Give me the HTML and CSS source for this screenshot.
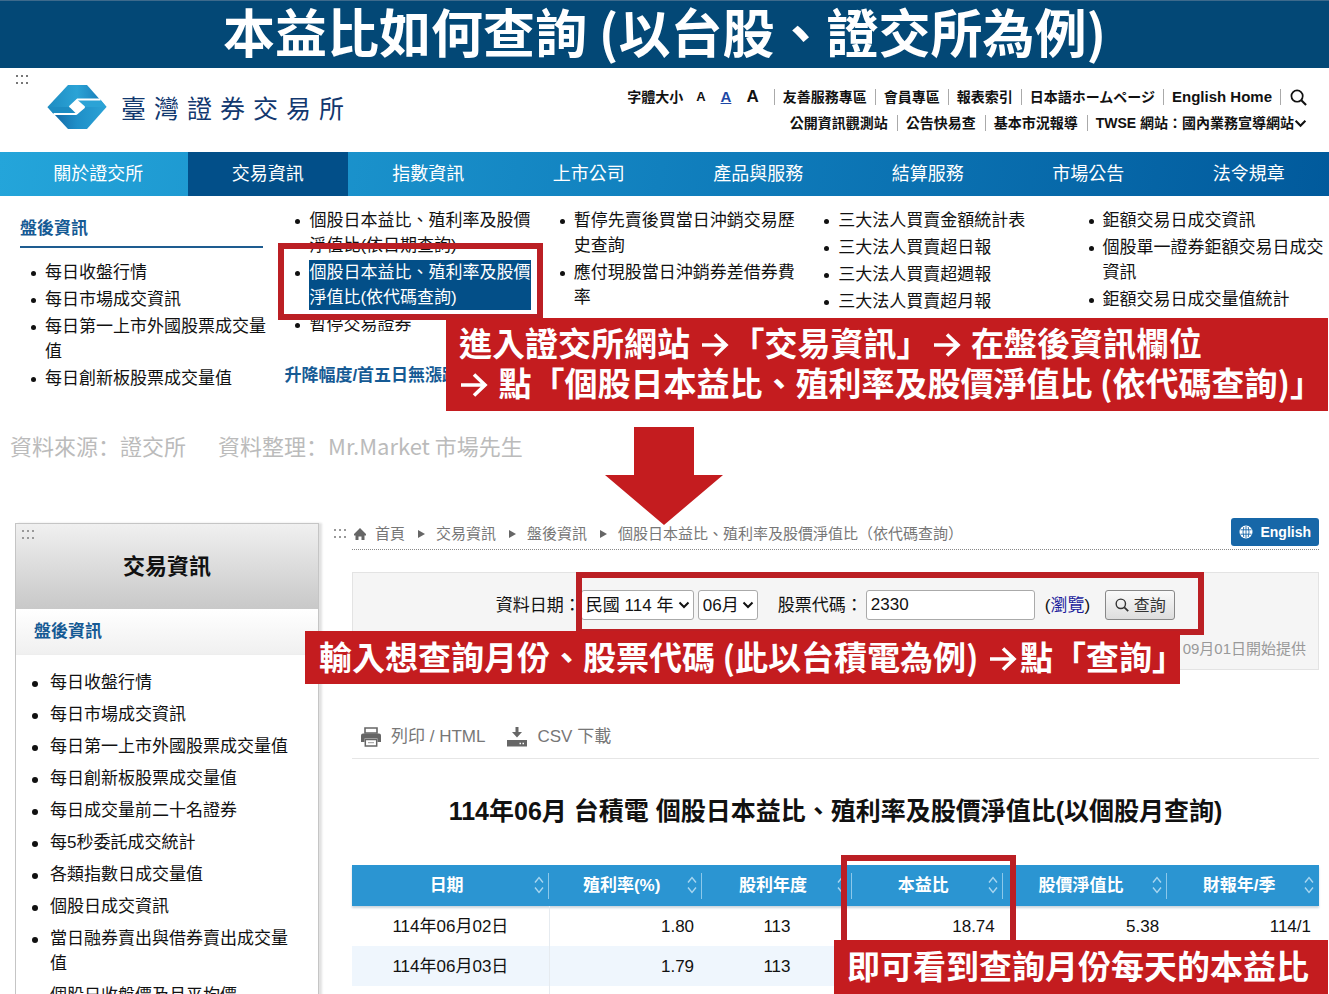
FILE: index.html
```html
<!DOCTYPE html>
<html lang="zh-Hant">
<head>
<meta charset="utf-8">
<title>本益比如何查詢</title>
<link rel="stylesheet" href="styles.css">
</head>
<body>
<svg class="defs" aria-hidden="true">
  <symbol id="arrow" viewBox="0 0 28 28"><path d="M1 15H25M14 4.500L25 15L14 25.500" fill="none" stroke="currentColor" stroke-width="3.600"/></symbol>
  <symbol id="grip" viewBox="0 0 14 12"><path d="M1 1h2v2H1zM6 1h2v2H6zM11 1h2v2h-2zM1 8h2v2H1zM6 8h2v2H6zM11 8h2v2h-2z" fill="currentColor"/></symbol>
  <symbol id="search" viewBox="0 0 18 18"><circle cx="7.500" cy="7.500" r="6" fill="none" stroke="currentColor" stroke-width="1.800"/><path d="M12 12L17 17" stroke="currentColor" stroke-width="2.200"/></symbol>
  <symbol id="chevron" viewBox="0 0 12 8"><path d="M1.500 1.500L6 6L10.500 1.500" fill="none" stroke="currentColor" stroke-width="2"/></symbol>
  <symbol id="sort" viewBox="0 0 10 18"><path d="M1 6.500L5 1.500L9 6.500M1 11.500L5 16.500L9 11.500" fill="none" stroke="currentColor" stroke-width="1.400"/></symbol>
</svg>
<div class="page">
  <h1 class="banner">本益比如何查詢 (以台股、證交所為例)</h1>

  <header class="header">
    <svg class="grip grip-dark"><use href="#grip"/></svg>
    <div class="brand">
      <svg class="logo" viewBox="0 0 59 44">
        <defs>
          <linearGradient id="g1" x1="0" y1="0" x2="1" y2="0"><stop offset="0" stop-color="#1d8cc2"/><stop offset=".5" stop-color="#2ba3d6"/><stop offset="1" stop-color="#1575b2"/></linearGradient>
          <linearGradient id="g2" x1="0" y1="0" x2="1" y2="0"><stop offset="0" stop-color="#115f9d"/><stop offset=".5" stop-color="#1f8fc8"/><stop offset="1" stop-color="#2ba3d6"/></linearGradient>
        </defs>
        <path d="M0 22L20.500 0H39.500L59 22Z" fill="url(#g1)"/>
        <path d="M0 22H59L39.500 44H20.500Z" fill="url(#g2)"/>
        <path d="M31 14.500H53L59 22H36Z" fill="#2ba3d6"/>
        <path d="M0 22H22L28 29H6Z" fill="#1d8cc2"/>
        <path d="M53 14.500H30L22 22M6 29H28.500L37 22" fill="none" stroke="#fff" stroke-width="1.800"/>
        <path d="M29.500 14.500L37.500 21.500L29.500 29.500L22 22Z" fill="#fff"/>
      </svg>
      <div class="brand-name"><span>臺</span><span>灣</span><span>證</span><span>券</span><span>交</span><span>易</span><span>所</span></div>
    </div>
    <div class="utility">
      <div class="util-row">
        <span class="size-label">字體大小</span>
        <button class="size small">A</button><button class="size medium">A</button><button class="size large">A</button>
        <a class="sep" href="#">友善服務專區</a><a class="sep" href="#">會員專區</a><a class="sep" href="#">報表索引</a><a class="sep" href="#">日本語ホームページ</a><a class="sep latin" href="#">English Home</a>
        <button class="sep find" aria-label="搜尋"><svg><use href="#search"/></svg></button>
      </div>
      <div class="util-row roomy">
        <a href="#">公開資訊觀測站</a><a class="sep" href="#">公告快易查</a><a class="sep" href="#">基本市況報導</a><a class="sep last" href="#">TWSE 網站：國內業務宣導網站<svg class="chev"><use href="#chevron"/></svg></a>
      </div>
    </div>
  </header>

  <nav class="nav">
    <a href="#">關於證交所</a><a href="#" class="active">交易資訊</a><a href="#">指數資訊</a><a href="#">上市公司</a><a href="#">產品與服務</a><a href="#">結算服務</a><a href="#">市場公告</a><a href="#">法令規章</a>
  </nav>

  <section class="mega">
    <div>
      <h2 class="group lined">盤後資訊</h2>
      <ul>
        <li><a href="#">每日收盤行情</a></li>
        <li><a href="#">每日市場成交資訊</a></li>
        <li><a href="#">每日第一上市外國股票成交量值</a></li>
        <li><a href="#">每日創新板股票成交量值</a></li>
      </ul>
    </div>
    <div>
      <ul>
        <li><a href="#">個股日本益比、殖利率及股價淨值比(依日期查詢)</a></li>
        <li class="picked"><a href="#">個股日本益比、殖利率及股價淨值比(依代碼查詢)</a></li>
        <li><a href="#">暫停交易證券</a></li>
      </ul>
      <h2 class="group next">升降幅度/首五日無漲跌</h2>
    </div>
    <div>
      <ul>
        <li><a href="#">暫停先賣後買當日沖銷交易歷史查詢</a></li>
        <li><a href="#">應付現股當日沖銷券差借券費率</a></li>
      </ul>
    </div>
    <div>
      <ul>
        <li><a href="#">三大法人買賣金額統計表</a></li>
        <li><a href="#">三大法人買賣超日報</a></li>
        <li><a href="#">三大法人買賣超週報</a></li>
        <li><a href="#">三大法人買賣超月報</a></li>
      </ul>
    </div>
    <div>
      <ul>
        <li><a href="#">鉅額交易日成交資訊</a></li>
        <li><a href="#">個股單一證券鉅額交易日成交資訊</a></li>
        <li><a href="#">鉅額交易日成交量值統計</a></li>
      </ul>
    </div>
    <p class="callout step-one">進入證交所網站 <svg class="arrow"><use href="#arrow"/></svg>「交易資訊」<svg class="arrow"><use href="#arrow"/></svg> 在盤後資訊欄位<br><svg class="arrow lead"><use href="#arrow"/></svg> 點「個股日本益比、殖利率及股價淨值比 (依代碼查詢)」</p>
  </section>

  <p class="credit" lang="zh-Hans"><span>資料來源：證交所</span><span>資料整理：Mr.Market 市場先生</span></p>

  <section class="lower">
    <svg class="down" viewBox="0 0 118 98"><path d="M29 0H89V48H118L59 98L0 48H29Z" fill="#c41c1f"/></svg>
    <aside class="side">
      <div class="side-head"><svg class="grip"><use href="#grip"/></svg>交易資訊</div>
      <h2 class="side-group">盤後資訊</h2>
      <ul>
        <li><a href="#">每日收盤行情</a></li>
        <li><a href="#">每日市場成交資訊</a></li>
        <li><a href="#">每日第一上市外國股票成交量值</a></li>
        <li><a href="#">每日創新板股票成交量值</a></li>
        <li><a href="#">每日成交量前二十名證券</a></li>
        <li><a href="#">每5秒委託成交統計</a></li>
        <li><a href="#">各類指數日成交量值</a></li>
        <li><a href="#">個股日成交資訊</a></li>
        <li><a href="#">當日融券賣出與借券賣出成交量值</a></li>
        <li><a href="#">個股日收盤價及月平均價</a></li>
      </ul>
    </aside>

    <main class="main">
      <div class="crumbs">
        <svg class="grip"><use href="#grip"/></svg>
        <svg class="home" viewBox="0 0 12 12"><path d="M6 0L12 6V7.500H10.500V12H7.500V8.500H4.500V12H1.500V7.500H0V6Z" fill="#666"/></svg>
        <a href="#">首頁</a><i></i><a href="#">交易資訊</a><i></i><a href="#">盤後資訊</a><i></i><a href="#">個股日本益比、殖利率及股價淨值比（依代碼查詢）</a>
        <button class="lang"><svg viewBox="0 0 14 14"><circle cx="7" cy="7" r="6.500" fill="#fff"/><path d="M1.500 4.800H12.500M1.500 9.200H12.500M7 1V13M4.800 2Q3.200 7 4.800 12M9.200 2Q10.800 7 9.200 12" fill="none" stroke="#1767a8" stroke-width=".9"/></svg>English</button>
      </div>

      <form class="query">
        <div class="fields">
          <label for="year">資料日期：</label>
          <span class="pick year"><select id="year"><option>民國 114 年</option></select><svg><use href="#chevron"/></svg></span>
          <span class="pick month"><select id="month" aria-label="月份"><option>06月</option></select><svg><use href="#chevron"/></svg></span>
          <label for="code" class="code-label">股票代碼：</label>
          <input id="code" type="text" value="2330">
          <span class="browse">(<a href="#">瀏覽</a>)</span>
          <button type="button" class="go"><svg><use href="#search"/></svg>查詢</button>
        </div>
        <p class="note">09月01日開始提供</p>
        <div class="frame frame-form"></div>
      </form>
      <p class="callout step-two">輸入想查詢月份、股票代碼 (此以台積電為例) <svg class="arrow"><use href="#arrow"/></svg>點「查詢」</p>

      <div class="actions">
        <a href="#"><svg viewBox="0 0 20 20"><path d="M4 1H16V6H4Z" fill="none" stroke="#666" stroke-width="1.600"/><path d="M2 6.500H18Q20 6.500 20 8.500V15H16.500V11.500H3.500V15H0V8.500Q0 6.500 2 6.500Z" fill="#666"/><path d="M4.300 12.500H15.700V19H4.300Z" fill="#fff" stroke="#666" stroke-width="1.500"/><path d="M7 15.700H13" stroke="#999"/></svg>列印 / HTML</a>
        <a href="#"><svg viewBox="0 0 20 20"><path d="M8.500 0H11.500V5H15L10 10.500L5 5H8.500Z" fill="#666"/><path d="M0 13H20V19.500H0Z" fill="#666"/><path d="M12.500 16.500h1.500M15.500 16.500H17" stroke="#fff" stroke-width="1.300"/></svg>CSV 下載</a>
      </div>

      <h2 class="title">114年06月 台積電 個股日本益比、殖利率及股價淨值比(以個股月查詢)</h2>

      <div class="result">
        <table>
          <colgroup><col class="c1"><col class="c2"><col class="c3"><col class="c4"><col class="c5"><col class="c6"></colgroup>
          <thead>
            <tr><th>日期<svg><use href="#sort"/></svg></th><th>殖利率(%)<svg><use href="#sort"/></svg></th><th>股利年度<svg><use href="#sort"/></svg></th><th>本益比<svg><use href="#sort"/></svg></th><th>股價淨值比<svg><use href="#sort"/></svg></th><th>財報年/季<svg><use href="#sort"/></svg></th></tr>
          </thead>
          <tbody>
            <tr><td>114年06月02日</td><td>1.80</td><td>113</td><td>18.74</td><td>5.38</td><td>114/1</td></tr>
            <tr><td>114年06月03日</td><td>1.79</td><td>113</td><td></td><td></td><td></td></tr>
            <tr><td></td><td></td><td></td><td></td><td></td><td></td></tr>
          </tbody>
        </table>
        <div class="frame frame-ratio"></div>
        <p class="callout step-three">即可看到查詢月份每天的本益比</p>
      </div>
    </main>
  </section>
</div>
</body>
</html>
```
FILE: styles.css
```css
*, *::before, *::after { box-sizing: border-box; }
body { margin: 0; background: #fff; color: #111; font: 17px/25px "Liberation Sans", "Noto Sans CJK TC", sans-serif; }
h1, h2, p, ul { margin: 0; padding: 0; }
a { color: inherit; text-decoration: none; }
button { border: 0; padding: 0; background: none; color: inherit; font: inherit; }
.defs { display: none; }
.page { height: 100vh; overflow: hidden; }

.banner { height: 68px; background: #034876; border-top: 1px solid #3d6a8c; color: #fff; text-align: center; font: bold 52px/60px "Noto Sans CJK TC", sans-serif; }

.header { position: relative; display: flex; justify-content: space-between; height: 84px; padding: 16px 22px 0 47px; }
.grip { width: 14px; height: 12px; color: #999; }
.grip-dark { position: absolute; left: 15px; top: 6px; color: #777; }
.brand { display: flex; gap: 14px; height: 46px; align-items: center; }
.logo { width: 60px; height: 44px; }
.brand-name { display: flex; gap: 8px; font: 25px/40px "Noto Sans CJK TC", sans-serif; color: #12386f; }
.utility { font-weight: bold; font-size: 14px; }
.util-row { display: flex; justify-content: flex-end; align-items: center; height: 26px; }
.util-row a { padding: 0 8px; line-height: 16px; }
.util-row.roomy a { padding: 0 9px 0 8px; }
.util-row .sep { border-left: 1px solid #aaa; }
.util-row.roomy .last { display: flex; align-items: center; padding-right: 0; }
.util-row .latin { font-size: 15px; }
.size-label { padding-right: 13px; }
.size { margin-right: 15px; line-height: 16px; }
.small { font-size: 13px; }
.medium { font-size: 15px; color: #1d47a5; text-decoration: underline; }
.large { font-size: 17px; }
.find { height: 16px; padding-left: 9px; }
.find svg { display: block; width: 17px; height: 17px; }
.chev { width: 13px; height: 9px; }

.nav { display: flex; height: 44px; padding-left: 9px; background: linear-gradient(100deg, #24a5da, #0f7cbb 55%, #015a9c); color: #fff; font-size: 18px; line-height: 44px; }
.nav a { flex: 1 1 auto; text-align: center; }
.nav .active { background: #024f89; }

.mega { position: relative; display: grid; grid-template-columns: repeat(5, 1fr); gap: 18px; padding: 12px 5px 38px 20px; }
.mega ul, .side ul { list-style: none; }
.mega li { position: relative; padding-left: 25px; margin-bottom: 2px; }
.mega li::before, .side li::before { content: ""; position: absolute; left: 11px; top: 11px; width: 5px; height: 5px; border-radius: 50%; background: #111; }
.mega .picked::after { content: ""; position: absolute; left: -6px; top: -17px; right: -12px; height: 77px; border: 6px solid #bb1f24; z-index: 1; }
.picked a { display: block; background: #034f88; color: #fff; }
.group { font-size: 17px; line-height: 25px; color: #155a94; }
.lined { margin: 8px 3px 12px 0; padding-bottom: 5px; border-bottom: 2px solid #1e5c90; }
.next { margin-top: 26px; white-space: nowrap; }

.callout { position: absolute; z-index: 2; background: #c41c1f; color: #fff; font: bold 33px/40px "Noto Sans CJK TC", sans-serif; white-space: nowrap; }
.arrow { width: 28px; height: 28px; margin: 0 3px; vertical-align: -2px; }
.arrow.lead { margin-left: 1px; }
.step-one { left: 446px; right: 1px; top: 122px; padding: 4px 0 9px 13px; }
.frame { position: absolute; z-index: 1; border: 6px solid #bb1f24; }

.credit { display: flex; gap: 32px; padding-left: 10px; color: #bbb; font: 22px/28px "Noto Sans CJK SC", sans-serif; }

.lower { position: relative; display: grid; grid-template-columns: 304px 1fr; gap: 33px; padding: 59px 10px 0 15px; }
.down { position: absolute; left: 605px; top: -32px; width: 118px; height: 98px; }
.side { margin-top: 5px; border: 1px solid #c5c5c5; box-shadow: 3px 0 2px #e2e2e2; }
.side-head { position: relative; height: 85px; background: linear-gradient(#f0f0f0, #c8c8c8); text-align: center; font-size: 22px; font-weight: bold; line-height: 85px; }
.side-head .grip { position: absolute; left: 5px; top: 5px; }
.side-group { padding-left: 18px; height: 46px; font-size: 17px; line-height: 45px; color: #155a94; background: linear-gradient(#fff, #f0f0f0); border-bottom: 1px solid #eee; }
.side ul { padding-top: 15px; }
.side li { position: relative; padding: 0 20px 0 34px; margin-bottom: 7px; }
.side li::before { left: 16px; width: 6px; height: 6px; }

.main { position: relative; }
.crumbs { display: flex; align-items: center; height: 32px; border-bottom: 1px dotted #888; color: #777; font-size: 15px; white-space: nowrap; }
.crumbs .grip { position: absolute; left: -19px; top: 10px; }
.home { width: 12px; height: 12px; margin: 0 9px 0 2px; }
.crumbs i { margin: 0 11px 0 13px; border: 4px solid transparent; border-left: 7px solid #666; border-right: 0; }
.lang { display: flex; align-items: center; gap: 7px; height: 28px; margin: 0 0 3px auto; padding: 0 8px; border-radius: 3px; background: #1767a8; color: #fff; font-size: 14px; font-weight: bold; }
.lang svg { width: 14px; height: 14px; }

.query { position: relative; margin-top: 22px; padding: 17px 12px 8px; border: 1px solid #e3e3e3; background: #f5f5f5; }
.fields { display: flex; align-items: center; justify-content: center; white-space: nowrap; }
.pick { position: relative; margin-right: 4px; }
.pick select, .fields input { width: 100%; height: 30px; border: 1px solid #aaa; border-radius: 3px; background: #fff; color: #111; font: inherit; padding: 0 4px; }
.pick select { display: block; appearance: none; }
.pick svg { position: absolute; right: 4px; top: 11px; width: 12px; height: 8px; }
.year { width: 113px; }
.month { width: 60px; }
.code-label { margin-left: 16px; }
.fields input { width: 169px; margin: 0 10px 0 3px; }
.browse a { color: #1c1c9c; }
.go { display: flex; align-items: center; justify-content: center; gap: 5px; width: 70px; height: 30px; margin-left: 15px; border: 1px solid #888; border-radius: 3px; background: linear-gradient(#fafafa, #ddd); color: #333; font-size: 16px; }
.go svg { width: 14px; height: 14px; }
.note { margin-top: 17px; text-align: right; font-size: 15px; line-height: 24px; color: #999; }
.frame-form { left: 223px; top: -1px; width: 628px; height: 63px; }
.step-two { left: -47px; right: 139px; top: 113px; padding: 5px 0 8px 14px; }

.actions { display: flex; gap: 22px; margin-top: 52px; padding: 0 9px 6px; border-bottom: 1px solid #e6e6e6; color: #777; font-size: 17px; line-height: 30px; }
.actions a { display: flex; align-items: center; gap: 10px; }
.actions svg { width: 20px; height: 20px; }
.title { margin-top: 34px; text-align: center; font-size: 25px; line-height: 36px; white-space: nowrap; }

.result { position: relative; margin-top: 36px; }
table { width: 100%; border-collapse: collapse; table-layout: fixed; }
.c1 { width: 20.4%; }
.c2 { width: 15.8%; }
.c3 { width: 15.5%; }
.c4 { width: 15.6%; }
.c5 { width: 17%; }
thead { background: #2b95d2; color: #fff; box-shadow: 0 2px 2px #ccd6de; }
th { position: relative; height: 41px; padding: 0 8px 0 0; white-space: nowrap; }
th svg { position: absolute; right: 5px; top: 11px; width: 10px; height: 18px; color: #a9d6f0; }
th:not(:last-child)::after { content: ""; position: absolute; right: 0; top: 8px; width: 1px; height: 26px; background: #8cc8ea; }
td { height: 40px; padding: 0 8px; text-align: right; }
td:first-child { padding: 0; text-align: center; border-right: 1px solid #e6ebf0; }
td:nth-child(3) { text-align: center; }
tbody tr:nth-child(even) { background: #eff6fd; }
.frame-ratio { left: 489px; top: -10px; width: 175px; height: 92px; }
.step-three { left: 482px; right: -9px; top: 75px; padding: 5px 0 9px 13px; }
```
